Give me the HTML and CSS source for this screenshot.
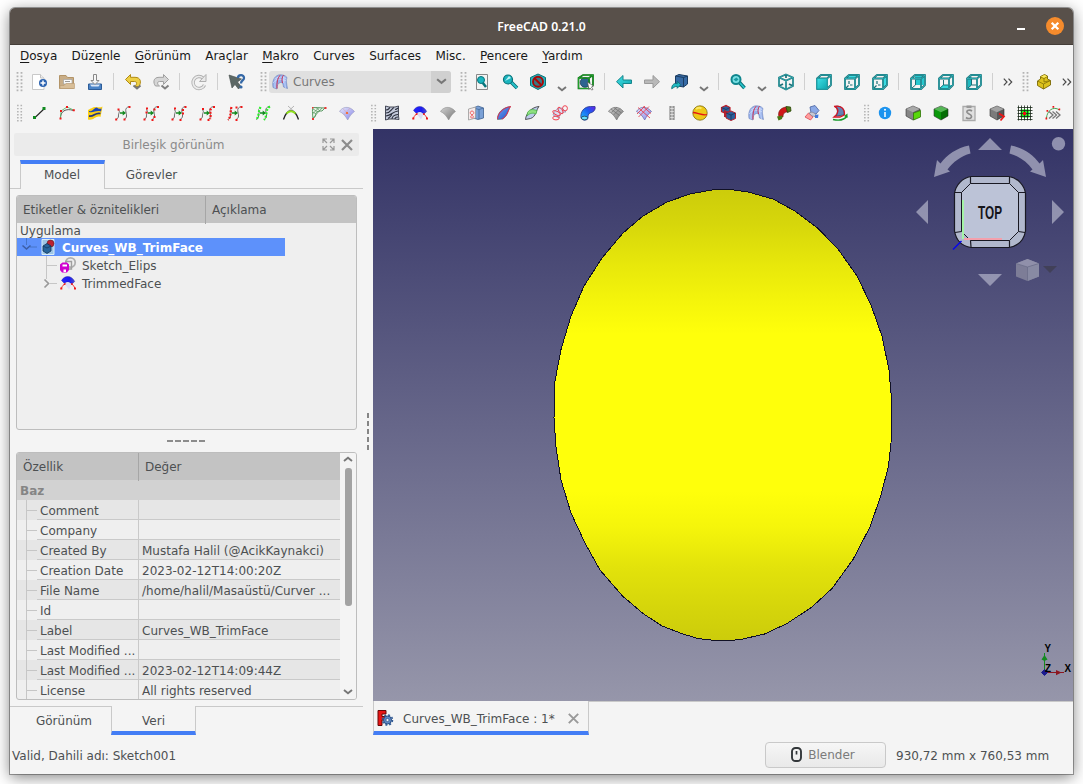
FILE: index.html
```html
<!DOCTYPE html>
<html lang="tr">
<head>
<meta charset="utf-8">
<title>FreeCAD 0.21.0</title>
<link rel="stylesheet" href="styles.css">
</head>
<body>
<svg class="defs" width="0" height="0">
  <defs>
    <linearGradient id="lilac" x1="0" y1="0" x2="1" y2="1"><stop offset="0" stop-color="#e6e6fb"/><stop offset="1" stop-color="#8686e8"/></linearGradient>
    <linearGradient id="silver" x1="0" y1="0" x2="1" y2="1"><stop offset="0" stop-color="#d0d0d0"/><stop offset="1" stop-color="#777"/></linearGradient>
    <linearGradient id="deep" x1="0" y1="0" x2="1" y2="0"><stop offset="0" stop-color="#2424ff"/><stop offset=".6" stop-color="#1c1cf0"/><stop offset="1" stop-color="#5050d0"/></linearGradient>
    <linearGradient id="sky" x1="0" y1="1" x2="1" y2="0"><stop offset="0" stop-color="#1fc4ff"/><stop offset=".6" stop-color="#1b5cf0"/><stop offset="1" stop-color="#6a20e8"/></linearGradient>
    <linearGradient id="leaf" x1="0" y1="0" x2="1" y2="1"><stop offset="0" stop-color="#6fa2f5"/><stop offset="1" stop-color="#1f52c4"/></linearGradient>
    <linearGradient id="aqua" x1="0" y1="0" x2="1" y2="1"><stop offset="0" stop-color="#3fe0e6"/><stop offset="1" stop-color="#0fa6ae"/></linearGradient>
    <linearGradient id="egg" x1="0" y1="0" x2="0" y2="1">
      <stop offset="0" stop-color="#cccc0b"/><stop offset=".08" stop-color="#d7d70b"/><stop offset=".17" stop-color="#e8e80b"/><stop offset=".25" stop-color="#f5f50b"/><stop offset=".32" stop-color="#ffff0b"/><stop offset=".67" stop-color="#ffff0b"/><stop offset=".75" stop-color="#f5f50b"/><stop offset=".84" stop-color="#e2e20b"/><stop offset=".93" stop-color="#d5d50b"/><stop offset="1" stop-color="#cccc0b"/>
    </linearGradient>
    <linearGradient id="backdrop" x1="0" y1="0" x2="0" y2="1"><stop offset="0" stop-color="#333366"/><stop offset="1" stop-color="#9696aa"/></linearGradient>

    <symbol id="grip" viewBox="0 0 8 22">
      <path d="M1.500 1V22M5.500 1V22" stroke="#b4b4b4" stroke-width="1.800" stroke-dasharray="1.700 1.800"/>
    </symbol>
    <symbol id="chev" viewBox="0 0 10 6"><path d="M1 1L5 4.300L9 1" fill="none" stroke="#777" stroke-width="1.900"/></symbol>
    <symbol id="more" viewBox="0 0 10 8"><path d="M.8 .7L4 4L.8 7.300M5.500 .7L8.700 4L5.500 7.300" fill="none" stroke="#4a4a4a" stroke-width="1.200"/></symbol>

    <symbol id="cubewire" viewBox="0 0 18 18">
      <path d="M2 5.500L6 2H16V12L12 16H2ZM2 5.500H12V16M12 5.500L16 2" fill="none" stroke="#1b7077" stroke-width="1.800" stroke-linejoin="round"/>
      <path d="M2 5.500L6 2H16V12L12 16H2ZM2 5.500H12V16M12 5.500L16 2" fill="none" stroke="#35bfc6" stroke-width=".7"/>
    </symbol>
    <symbol id="squig" viewBox="0 0 18 18">
      <path d="M4 5.500C7 7 4 9.500 4.500 12C4.500 14 3 15 2 15.500M15.500 2.500C9 4 13 9 12.500 12C12.500 14 11 15 10 15.500" fill="none" stroke="#6a6a6a"/>
    </symbol>
    <symbol id="go" viewBox="0 0 18 18"><path d="M6 8.300H8.700V6.500L12 9L8.700 11.500V9.700H6Z" fill="#138a20"/></symbol>
    <symbol id="patch" viewBox="0 0 18 18"><path d="M1.500 7.500C4 3 11 1 16.500 7.500C13.500 9.500 11.500 12.500 9.700 16C7.500 12 5 9 1.500 7.500Z"/></symbol>
    <symbol id="trimmed" viewBox="0 0 18 18">
      <path d="M2.500 6.500C5.500 1 12.500 1 15.700 7.500L12.500 10.300C9.500 7 7.500 8 5.500 9.500Z" fill="url(#deep)" stroke="#1a1a90" stroke-width=".4"/>
      <path d="M5.500 9.700C8 7.300 10.500 7.800 12.500 10.300L10 15.500C9 14 7 11.500 5.500 9.700Z" fill="#dcdcf4"/>
      <path d="M2.300 14.500C3.500 11.500 4.500 10.500 6.500 9.500M16 14.500C15 12 14 10.800 12.500 10" fill="none" stroke="#f03030" stroke-width="1"/>
      <path d="M1.300 13.500h2v2h-2zM15 13.500h2v2h-2zM4.800 9.500h1.600v1.600H4.800zM12.200 9.300h1.600v1.600h-1.600z" fill="#f01818"/>
    </symbol>
    <symbol id="box" viewBox="0 0 18 18">
      <path d="M9 2L16 5V12L9 16L2 12V5Z" stroke="#333" stroke-width=".6"/><path d="M9 2L16 5L9 8.300L2 5Z" fill="#fff" fill-opacity=".3"/><path d="M9 8.300L16 5V12L9 16Z" fill="#000" fill-opacity=".28"/>
    </symbol>
    <symbol id="fan" viewBox="0 0 18 18">
      <path d="M2 14.500C1 8 3 3.500 7.500 2C11 1.500 14 2 16 4.500C15 7 15.500 11 16.500 15.500L12.500 14C12 10.500 11.500 9.500 9.500 9.500C7 10 6 12 6 16Z" fill="#95b0ec" stroke="#6d83bb" stroke-width=".6"/>
      <path d="M4 15C3.500 9 5 4.500 9 2.500M2.200 10C4 6 9 5 15.500 8M3.500 6C7 3.500 12 3.500 15.500 6M14.500 15C13.500 9 13.500 6 14 3.500M12.500 10L12.500 3" fill="none" stroke="#dbe6ff" stroke-width=".6"/>
      <path d="M6 15.500C5.500 10 6.500 5 9 2.200M11.500 10C10.500 7 11 4 12.500 2.200" fill="none" stroke="#cf3050" stroke-width="1"/>
    </symbol>
  </defs>
</svg>

<div class="window">
  <header class="titlebar">
    <span class="titlebar-text">FreeCAD 0.21.0</span>
    <div class="titlebar-buttons">
      <span class="minimize"></span>
      <svg class="close" viewBox="0 0 18 18"><circle cx="9" cy="9" r="9" fill="#f58b2c"/><path d="M5.700 5.700L12.300 12.300M12.300 5.700L5.700 12.300" stroke="#fff" stroke-width="2.300"/></svg>
    </div>
  </header>

  <nav class="menubar">
    <span><u>D</u>osya</span><span>Düz<u>e</u>nle</span><span><u>G</u>örünüm</span><span>Araçlar</span><span><u>M</u>akro</span><span>Curves</span><span>Surfaces</span><span>Misc.</span><span><u>P</u>encere</span><span><u>Y</u>ardım</span>
  </nav>

  <div class="toolbar">
    <svg class="grip"><use href="#grip"/></svg>
    <svg class="tool" viewBox="0 0 18 18"><path d="M2.500 1.500H10.500L14 5V16.500H2.500Z" fill="#fff" stroke="#c9c9c9"/><path d="M10.500 1.500V5H14" fill="#eee" stroke="#c4c4c4"/><circle cx="13" cy="10" r="4" fill="#2c63b0"/><path d="M13 7.500V12.500M10.500 10H15.500" stroke="#fff" stroke-width="1.500"/></svg>
    <svg class="tool" viewBox="0 0 18 18"><path d="M1.500 2.500H8L9.500 4.500H15.500V15.500H1.500Z" fill="#c8ad87" stroke="#b39468"/><path d="M5.500 6.500H14V11H5.500Z" fill="#fafafa" stroke="#999" stroke-width=".6"/><path d="M7 8.500H12" stroke="#999"/><path d="M2 15.500V12.500H6L8 10.500H16.500V15.500Z" fill="#d8be98" stroke="#b99b72" stroke-width=".6"/></svg>
    <svg class="tool" viewBox="0 0 18 18"><path d="M2.500 11H15.500V16.500H2.500Z" fill="#4a83c6" stroke="#2d5c97"/><path d="M4 11.500H14L12.500 13.500H5.500Z" fill="#dce8f7"/><path d="M7.500 1.500H10.500V7.500H13L9 11.500L5 7.500H7.500Z" fill="#f6f6f6" stroke="#888"/></svg>
    <i class="sep"></i>
    <svg class="tool" viewBox="0 0 18 18"><path d="M6.500 1.500V4.300H11C17 4.300 17.500 9.500 15 13.500H10.500C13 12 13.500 8.500 10.500 8.500H6.500V11.500L1.500 6.500Z" fill="#edcf45" stroke="#b08a14"/><path d="M9.500 12.500L13 15.500L16.500 12.500" fill="none" stroke="#777" stroke-width="2"/></svg>
    <svg class="tool" viewBox="0 0 18 18"><path d="M11.500 1.500V4.300H7C1 4.300 1 10 3.500 13H7.500C5 11.500 5 8.500 7.500 8.500H11.500V11.500L16.500 6.500Z" fill="#d6d6d6" stroke="#a0a0a0"/><path d="M9.500 12.500L13 15.500L16.500 12.500" fill="none" stroke="#808080" stroke-width="2"/></svg>
    <i class="sep"></i>
    <svg class="tool" viewBox="0 0 18 18"><path d="M13 5A6 6 0 1 0 14.500 12" fill="none" stroke="#b0b0b0" stroke-width="3.400"/><path d="M13 5A6 6 0 1 0 14.500 12" fill="none" stroke="#ececec" stroke-width="1.600"/><path d="M16 1.500V8.500H9.500Z" fill="#e9e9e9" stroke="#b0b0b0"/></svg>
    <i class="sep"></i>
    <svg class="tool" viewBox="0 0 18 18"><path d="M1 2L13.500 6L9.500 9L13 13.500L10.500 16L7 11.500L4 15Z" fill="#5c6865" stroke="#454e4b" stroke-width=".6"/><path d="M10 5C10 1.500 16 1 16 5C16 7.500 13 7.500 13 10.500" fill="none" stroke="#3568a6" stroke-width="2.300"/><circle cx="13" cy="14" r="1.600" fill="#3568a6"/></svg>

    <svg class="grip grip-combo"><use href="#grip"/></svg>
    <div class="combo">
      <svg class="combo-icon" viewBox="0 0 18 18"><use href="#fan"/></svg>
      <span>Curves</span>
      <div class="combo-arrow"><svg width="11" height="7"><use href="#chev"/></svg></div>
    </div>
    <svg class="grip grip-view"><use href="#grip"/></svg>

    <svg class="tool" viewBox="0 0 18 18"><path d="M3.500 1.500H14.500V16.500H3.500Z" fill="#f3f3f3" stroke="#888"/><path d="M9.500 9.500L13 14" stroke="#08757c" stroke-width="2.600"/><circle cx="8" cy="7" r="3.500" fill="#1bb5bf" stroke="#08757c"/></svg>
    <svg class="tool" viewBox="0 0 18 18"><path d="M10 9L16 15" stroke="#086d74" stroke-width="3.600"/><path d="M10 9L16 15" stroke="#28c4cc" stroke-width="1.800"/><circle cx="7" cy="6.500" r="4.500" fill="#1bb5bf" stroke="#087077" stroke-width="1.200"/><path d="M4 8L8 3L10 5Z" fill="#bdf3f5"/></svg>
    <div class="drop">
      <svg class="tool" viewBox="0 0 18 18"><path d="M9 1L16.500 4.500V12.500L9 16.500L1.500 12.500V4.500Z" fill="#25b3bd" stroke="#087077"/><circle cx="9" cy="8.700" r="5" fill="#45606c" fill-opacity=".7" stroke="#a80808" stroke-width="1.900"/><path d="M5.500 5.200L12.500 12.200" stroke="#a80808" stroke-width="2"/></svg>
      <svg class="chev"><use href="#chev"/></svg>
    </div>
    <svg class="tool" viewBox="0 0 18 18"><circle cx="8" cy="9.500" r="4.800" fill="#2d6390" stroke="#12344f" stroke-width=".7"/><path d="M1.500 5L6 2H16V12L12 15.500H1.500ZM1.500 5H12V15.500M12 5L16 2" fill="none" stroke="#0a6612" stroke-width="1.700"/><path d="M1.500 5L6 2H16V12L12 15.500H1.500ZM1.500 5H12V15.500M12 5L16 2" fill="none" stroke="#26ac32" stroke-width=".8"/><path d="M10.500 9L16.500 13L14.500 14L16 16.500L14.500 17L13 15L12 16.500Z" fill="#fff" stroke="#444" stroke-width=".6"/></svg>
    <i class="sep"></i>
    <svg class="tool" viewBox="0 0 18 18"><path d="M8 2.500V7H16.500V10.500H8V15L1.500 8.700Z" fill="url(#aqua)" stroke="#16868c"/></svg>
    <svg class="tool" viewBox="0 0 18 18"><path d="M10 2.500V7H1.500V10.500H10V15L16.500 8.700Z" fill="#b9b9b9" stroke="#9a9a9a"/></svg>
    <div class="drop">
      <svg class="tool" viewBox="0 0 18 18"><path d="M4.500 3L8 1.500L16.500 3V11L12.500 14L4.500 12.500Z" fill="#366aa5" stroke="#1b3d62"/><path d="M4.500 3L12.500 4.500L16.500 3M12.500 4.500V14" fill="none" stroke="#1b3d62"/><path d="M1.500 15C1.500 10 5 9 7 10V7.500L10.500 11L7 14.500V12.500C5 12.500 4 13.500 1.500 15Z" fill="#1fbac3" stroke="#08686e" stroke-width=".8" transform="translate(-.8 .8)"/></svg>
      <svg class="chev"><use href="#chev"/></svg>
    </div>
    <i class="sep"></i>
    <div class="drop">
      <svg class="tool" viewBox="0 0 18 18"><path d="M10 9L15.500 15" stroke="#086d74" stroke-width="3.600"/><path d="M10 9L15.500 15" stroke="#28c4cc" stroke-width="1.800"/><circle cx="7" cy="6.500" r="4.500" fill="#78dfe3" stroke="#0f858d" stroke-width="2"/><path d="M4.500 6.500L7.500 4.500L9.500 6.500L7 8.500Z" fill="#1a9aa2"/></svg>
      <svg class="chev"><use href="#chev"/></svg>
    </div>
    <svg class="tool" viewBox="0 0 18 18"><path d="M9 1.500L16 4.500V13L9 16.500L2 13V4.500ZM2 4.500L9 7.500L16 4.500M9 7.500V16.500M2 13L6 11M16 13L12 11M9 2V5" fill="none" stroke="#1b7077" stroke-width="1.700"/><path d="M9 1.500L16 4.500V13L9 16.500L2 13V4.500ZM2 4.500L9 7.500L16 4.500M9 7.500V16.500" fill="none" stroke="#3cc2c8" stroke-width=".6"/></svg>
    <i class="sep"></i>
    <svg class="tool" viewBox="0 0 18 18"><use href="#cubewire"/><path d="M2 5.500H12V16H2Z" fill="url(#aqua)" stroke="#1fa3aa"/></svg>
    <svg class="tool" viewBox="0 0 18 18"><path d="M2 5.500L6 2H16L12 5.500Z" fill="#39dce2"/><use href="#cubewire"/><path d="M6 8V11M5.500 12.500L3 15M7 12H9.500" fill="none" stroke="#1b7077" stroke-width="1.200"/></svg>
    <svg class="tool" viewBox="0 0 18 18"><path d="M12 5.500L16 2V12L12 16Z" fill="#39dce2"/><use href="#cubewire"/><path d="M6 8V11M5.500 12.500L3 15M7 12H9.500" fill="none" stroke="#1b7077" stroke-width="1.200"/></svg>
    <i class="sep"></i>
    <svg class="tool" viewBox="0 0 18 18"><path d="M6 3H15V12H6Z" fill="#27c8cf"/><use href="#cubewire"/><path d="M6.500 7V12L3 15" fill="none" stroke="#1b7077"/></svg>
    <svg class="tool" viewBox="0 0 18 18"><path d="M3 15L6 12H15L12 16Z" fill="#35d8de"/><use href="#cubewire"/><path d="M6.500 7V12L3 15M6.500 12H11" fill="none" stroke="#1b7077"/></svg>
    <svg class="tool" viewBox="0 0 18 18"><path d="M2.500 5.500L6.500 3V12L3 15.500Z" fill="#1cb8bf"/><use href="#cubewire"/><path d="M6.500 6V12L3 15M6.500 12H11" fill="none" stroke="#1b7077"/></svg>
    <i class="sep"></i>
    <svg class="more"><use href="#more"/></svg>
    <svg class="grip grip-end"><use href="#grip"/></svg>
    <svg class="tool" viewBox="0 0 18 18"><path d="M2.500 8L5.500 6V3.500L9.500 1.500L12.500 3V6L15.500 7.500V12L8.500 16L2.500 12.500Z" fill="#dcc21c" stroke="#7a6805" stroke-width=".9"/><path d="M5.500 4L9 5.500L12.500 3.500M9 5.500V9L15 7.500M2.500 8L8.500 11V16M8.500 11L15.500 7.500" fill="none" stroke="#7a6805" stroke-width=".7"/><path d="M6 3.500L9.500 2L12 3.200L9 4.800Z" fill="#fbea61"/></svg>
    <svg class="more more-last"><use href="#more"/></svg>
  </div>

  <div class="toolbar">
    <svg class="grip"><use href="#grip"/></svg>
    <svg class="tool" viewBox="0 0 18 18"><path d="M5 13.500L14.500 4.500" stroke="#222" stroke-width="1.100"/><path d="M3 12h3v3H3zM12.500 3h3v3h-3z" fill="#118a20"/></svg>
    <svg class="tool" viewBox="0 0 18 18"><path d="M2.500 15C2 7 8 4 15.500 6.500" fill="none" stroke="#555"/><path d="M2.500 14.500L3 7L9 3L15.500 6" fill="none" stroke="#5fb86a" stroke-width=".9"/><path d="M1.500 13.500h2v2h-2zM2 6h2v2H2zM8 2h2v2H8zM14.800 5.300h2v2h-2z" fill="#f01818"/></svg>
    <svg class="tool" viewBox="0 0 18 18"><path d="M2 6C5 5 6 3 10 3C12 3 14 4 16.500 2.500L14.500 13C10 11 8 17 2 15.500Z" fill="#fbcf14"/><path d="M3 7C7 8 8 3.500 11 3.500C12 5 14 5 15.500 4.500L15 7.500C10 6 8 9 3 8Z" fill="#1f44b8"/><path d="M3 12C8 13 9 8 14.500 9.500" fill="none" stroke="#28367c" stroke-width="1.800"/></svg>
    <svg class="tool" viewBox="0 0 18 18"><use href="#squig"/><use href="#go"/><path d="M3.500 4.500h2v2h-2zM1.200 14.500h2v2h-2zM14.500 2h2v2h-2zM9.500 14.500h2v2h-2z" fill="#f01818"/></svg>
    <svg class="tool" viewBox="0 0 18 18"><use href="#squig"/><use href="#go"/><path d="M4 3.500h2v2H4zM3.500 7.500h2v2h-2zM1.500 14.500h2v2h-2zM15 2h2v2h-2zM11.500 4.500h2v2h-2zM11.500 12h2v2h-2zM9.500 15h2v2h-2z" fill="#f01818"/></svg>
    <svg class="tool" viewBox="0 0 18 18"><use href="#squig"/><use href="#go"/><path d="M4 3.500h2v2H4zM1.500 14.500h2v2h-2zM14.500 2h2v2h-2zM12 5h2v2h-2zM12 8.500h2v2h-2zM9.500 15h2v2h-2z" fill="#f01818"/></svg>
    <svg class="tool" viewBox="0 0 18 18"><use href="#squig"/><use href="#go"/><path d="M13 4.500C11.500 8 13.500 11 12 15" fill="none" stroke="#f01818" stroke-width="2.200" stroke-dasharray="2 1.300"/><path d="M4 4h2v2H4zM1.500 14.500h2v2h-2zM15 2h2v2h-2zM9.500 15h2v2h-2z" fill="#f01818"/></svg>
    <svg class="tool" viewBox="0 0 18 18"><use href="#squig"/><use href="#go"/><path d="M5.500 3C4 8 5.500 12 2 16" fill="none" stroke="#f01818" stroke-width="2.200" stroke-dasharray="2 1.300"/><path d="M14.500 2h2v2h-2zM9.500 2.500h2v2h-2zM9.500 15h2v2h-2z" fill="#f01818"/></svg>
    <svg class="tool" viewBox="0 0 18 18"><use href="#squig"/><use href="#go"/><path d="M6.500 3C4 8 5.500 12 2 16M16 2.500C11 5 14 11 10 16" fill="none" stroke="#28f028" stroke-width="2.200" stroke-dasharray="2 1.500"/></svg>
    <svg class="tool" viewBox="0 0 18 18"><path d="M6 2L12 7.500M12 2L6 7.500" stroke="#b4b4b4"/><path d="M1.500 15.500C3.500 9 6 7 9 7C12 7 14.500 9 16.500 15.500" fill="none" stroke="#222" stroke-width="1.300"/><path d="M4.500 9.500C7.500 6.500 10.500 6.500 13.500 9.500" fill="none" stroke="#90e21a" stroke-width="1.900"/></svg>
    <svg class="tool" viewBox="0 0 18 18"><path d="M3 15C2 6 2.500 3.500 3.500 3.500L15 4L12 7C7 7 6 8 5.500 12Z" fill="#e7f4e7" stroke="#4d9157" stroke-width=".9"/><path d="M2.500 10L9 3.500M3 14L12 4M3 5L8 8M6 3.500L10 7M3 8L6 10" stroke="#4d9157" stroke-width=".7"/><path d="M2 14h2v2H2zM14.500 3h2v2h-2zM2 3h1.500v1.500H2z" fill="#e33"/></svg>
    <svg class="tool" viewBox="0 0 18 18"><use href="#patch" fill="url(#lilac)" stroke="#9a9ac0" stroke-width=".6"/><path d="M6 11L12 4M5 5L12 11" stroke="#d99" stroke-width=".6" opacity=".7"/><path d="M8 8h2v2H8z" fill="#f07040"/></svg>

    <svg class="grip grip-surf"><use href="#grip"/></svg>
    <svg class="tool" viewBox="0 0 18 18"><path d="M2.500 2L6 3H12L15.500 2V12L16 15.500L11 15H6L2.500 16Z" fill="#c3c9da" stroke="#353a48" stroke-width=".9"/><path d="M3 6C6 6 6 4 7 3.500M3 9C8 9 8 5 11 3.500M3 12C9 11 9 8 15 7M5 14.500C8 13 8 11 9 10.500M9 15C9 12 11 11 15 10.500M12 15C12 13.500 13 13 15 13M12 5.500C13 5.500 14 5 15 4" fill="none" stroke="#2a2f3c" stroke-width="1.100"/></svg>
    <svg class="tool" viewBox="0 0 18 18"><use href="#trimmed"/></svg>
    <svg class="tool" viewBox="0 0 18 18"><use href="#patch" fill="url(#silver)" stroke="#888" stroke-width=".5"/></svg>
    <svg class="tool" viewBox="0 0 18 18"><path d="M6.500 4L11 2L16.500 4V14L11 15.500L6.500 14Z" fill="#7aa0d6" stroke="#3d6190" stroke-width=".8"/><path d="M6.500 4L12 5.500L16.500 4M12 5.500V15" fill="none" stroke="#3d6190" stroke-width=".7"/><path d="M1.500 5L8.500 3V14L1.500 16Z" fill="#f4ebeb" stroke="#999" stroke-width=".8"/><path d="M5 7A1.800 1.800 0 1 0 5.100 7M5 11.500A1.300 1.300 0 1 0 5.100 11.500" fill="none" stroke="#e55" stroke-width=".9"/></svg>
    <svg class="tool" viewBox="0 0 18 18"><path d="M2.500 15.500C2 9.500 7 3.500 15.500 2.500C13 6 13 12 7.500 15Z" fill="url(#leaf)" stroke="#555" stroke-width=".6"/><path d="M2.500 15C3 9 8 4 15.500 2.500M15.500 2.500C12.500 7 12.500 12 7 15" fill="none" stroke="#ee2846" stroke-width=".9"/></svg>
    <svg class="tool" viewBox="0 0 18 18"><path d="M2.500 15.500C3 9 9 3 16 2.500C13 6 13 13 7.500 14.500Z" fill="#bccbec" stroke="#333" stroke-width=".8"/><path d="M4.500 8.500C7 5 9 5 14 6.500L13 10C9 8 6 10 4 12Z" fill="#8fe080" stroke="#35a535" stroke-width=".6"/></svg>
    <svg class="tool" viewBox="0 0 18 18"><path d="M2 11C4 5 7 4 11 4L15 8C11 8 9 10 8 14Z" fill="#dadef2" stroke="#8890b8" stroke-width=".7"/><g fill="none" stroke="#f03040" stroke-width=".9"><ellipse cx="5" cy="14" rx="3.300" ry="1.900"/><ellipse cx="5.500" cy="9" rx="4" ry="1.700" transform="rotate(25 5.500 9)"/><ellipse cx="9.500" cy="6.500" rx="1.700" ry="3.800" transform="rotate(-35 9.500 6.500)"/><ellipse cx="14" cy="4.300" rx="2.400" ry="2.600"/></g></svg>
    <svg class="tool" viewBox="0 0 18 18"><path d="M2 14C1 8 5 2.500 11.500 2.500H16C17 6 14 8.500 11 9C9 10 9 12 9 14.500C7 17 3.500 16.500 2 14Z" fill="url(#sky)" stroke="#24368c" stroke-width=".8"/><ellipse cx="5.500" cy="14" rx="3.200" ry="1.800" fill="#66ddff" stroke="#245" stroke-width=".8"/></svg>
    <svg class="tool" viewBox="0 0 18 18"><use href="#patch" fill="url(#silver)" stroke="#777" stroke-width=".7"/><path d="M4 5L12.500 11.500M7 3.700L14.500 9M13 4.500L6.500 11M10 3.300L4.500 8.500" stroke="#6c6c6c" stroke-width=".7"/></svg>
    <svg class="tool" viewBox="0 0 18 18"><use href="#patch" fill="url(#lilac)" stroke="#66a" stroke-width=".7"/><path d="M3 3.500L15 14M14 2.500L3.500 13M8 2.500L16 9.500M10 2L2 10" stroke="#e8323e" stroke-width=".8"/></svg>
    <svg class="tool" viewBox="0 0 18 18"><path d="M7 2V16M11 2V16M7 3H11M7 6H11M7 9H11M7 12H11M7 15H11" stroke="#6a6a6a" stroke-width=".9"/><path d="M7.500 4.500H10.500M7.500 7.500H10.500M7.500 10.500H10.500M7.500 13.500H10.500" stroke="#ddd"/></svg>
    <svg class="tool" viewBox="0 0 18 18"><circle cx="9" cy="9" r="7.200" fill="#eec918" stroke="#7d6a0a" stroke-width=".8"/><path d="M5 5C7 3.500 9 3.500 10.500 4.500" stroke="#fbe863" stroke-width="2" fill="none"/><path d="M2 8.500C6 8.500 12 12 16 10.500" fill="none" stroke="#e21616" stroke-width="1.300"/></svg>
    <svg class="tool" viewBox="0 0 18 18"><path d="M2.500 3.500L7 1.500L11 3.500V7.500L7 9.500L2.500 7.500Z" fill="#2f5f99" stroke="#c01c28" stroke-width="1.200"/><path d="M5 6L10 8L9.500 13L5 13Z" fill="#b51f2d"/><path d="M7 9L12 7L16.500 9V14.500L12 16.500L7 14Z" fill="#2c5f9a" stroke="#b51f2d"/><path d="M7 9L12 11L16.500 9M12 11V16M2.500 3.500L7 5.500L11 3.500" stroke="#173660" stroke-width=".8" fill="none"/></svg>
    <svg class="tool" viewBox="0 0 18 18"><use href="#fan"/></svg>
    <svg class="tool" viewBox="0 0 18 18"><path d="M4 13C2.500 8 5 4 11 3L13 8C9 8 8 10 8 13Z" fill="#d01818" stroke="#701010" stroke-width=".6"/><path d="M11 2.500L15.500 3L16 7L12.500 8.500Z" fill="#527a14" stroke="#2a4608" stroke-width=".8"/><path d="M2 12.500L7.500 11.500L7 15L3.500 16.500Z" fill="#4a7814"/></svg>
    <svg class="tool" viewBox="0 0 18 18"><path d="M7 3L12 1.500L16 6.500L13 10L8 9Z" fill="#8ba9e6" stroke="#4560a0" stroke-width=".8"/><path d="M2 13L5.500 9L10 13L7.500 16Z" fill="#ff9d9d" stroke="#dd4a52" stroke-width=".8"/><path d="M6 9L9 8L13 10L12 12.500L9 12Z" fill="#c6c9d6" stroke="#778" stroke-width=".6"/><path d="M12 11L15.500 10.500L15 14L12 14Z" fill="#3f78dc"/></svg>
    <svg class="tool" viewBox="0 0 18 18"><path d="M4 2.500C10 1 14 5 13 11L5 12C7 9 7 5 4 2.500Z" fill="#6482b4" stroke="#2d3c60" stroke-width=".8"/><path d="M4 2.500C8 5 8 9 3 13H9L13.500 11M3 2.500C9 1 14 4 13.500 11" fill="none" stroke="#d61522" stroke-width="1.300"/><path d="M2 15.500C9 17 14 15 16 12" fill="none" stroke="#149a28" stroke-width="1.400"/><path d="M13 12L16.500 9.500V14Z" fill="#149a28"/></svg>

    <svg class="grip grip-misc"><use href="#grip"/></svg>
    <svg class="tool" viewBox="0 0 18 18"><circle cx="9" cy="9" r="6.200" fill="#1b93ee"/><circle cx="9" cy="5.800" r="1" fill="#fff"/><path d="M9 8V13" stroke="#fff" stroke-width="1.500"/></svg>
    <svg class="tool" viewBox="0 0 18 18"><use href="#box" fill="#858585"/><path d="M9.500 9L16.500 6.500V13L9.500 16Z" fill="#58d80a" stroke="#357a0b" stroke-width=".8"/></svg>
    <svg class="tool" viewBox="0 0 18 18"><use href="#box" fill="#0b990b"/></svg>
    <svg class="tool" viewBox="0 0 18 18"><path d="M3 2.500H15V16.500H3Z" fill="#e0e0e0" stroke="#aaa" stroke-width="1.300"/><path d="M6.500 1.500H11.500V4H6.500Z" fill="#999"/><path d="M12 7C10 5.500 6.500 6 7 8.300C7.500 10 11.500 10 11.500 12.300C11.500 15 8 15 6 13.500" fill="none" stroke="#8b8b8b" stroke-width="1.700"/></svg>
    <svg class="tool" viewBox="0 0 18 18"><use href="#box" fill="#7b7b7b"/><path d="M11 9.500L16 12.500L12.500 16.500" fill="none" stroke="#ee1515" stroke-width="1.700"/></svg>
    <svg class="tool" viewBox="0 0 18 18"><path d="M2 2H16V16H2Z" fill="#fff"/><path d="M4.500 5.500H13.500V13.500H4.500Z" fill="#1cf01c"/><path d="M2.500 1.500V16.500M5.500 1.500V16.500M8.500 1.500V16.500M11.500 1.500V16.500M14.500 1.500V16.500M1.500 3.500H16.500M1.500 6.500H16.500M1.500 9.500H16.500M1.500 12.500H16.500M1.500 15.500H16.500" stroke="#152415" stroke-width=".8"/><path d="M7 8h3v3H7z" fill="#e11"/></svg>
    <svg class="tool" viewBox="0 0 18 18"><path d="M2.500 14C3 7 9 1.500 15.500 6" fill="none" stroke="#49a555"/><path d="M1.500 13.500h1.700v2H1.500zM2.500 6h1.700v1.700H2.500zM8.500 2h1.700v1.700H8.500zM14.500 4.500h1.700v1.700h-1.700z" fill="#ee1515"/><path d="M5 7.500L9 11L5 14.500M8.500 7.500L12.500 11L8.500 14.500M12 7.500L16 11L12 14.500" fill="none" stroke="#777" stroke-width="1.300"/></svg>
  </div>

  <main class="main">
    <aside class="side">
      <div class="dock-title">
        <span>Birleşik görünüm</span>
        <div class="dock-buttons">
          <svg width="13" height="13" viewBox="0 0 13 13"><path d="M1 5V1H5M1 1L5 5M8 1H12V5M12 1L8 5M1 8V12H5M1 12L5 8M12 8V12H8M12 12L8 8" fill="none" stroke="#999" stroke-width="1.200"/></svg>
          <svg width="12" height="12" viewBox="0 0 12 12"><path d="M1 1L11 11M11 1L1 11" stroke="#8c8c8c" stroke-width="2.200"/></svg>
        </div>
      </div>
      <div class="tabs tabs-top">
        <div class="tab tab-active">Model</div>
        <div class="tab">Görevler</div>
      </div>

      <section class="panel tree">
        <div class="head"><div class="head-name">Etiketler &amp; öznitelikleri</div><div>Açıklama</div></div>
        <div class="tree-root">Uygulama</div>
        <div class="tree-row tree-selected">
          <svg class="branch" width="22" height="18"><path d="M9.500 0V7M13 9H20" stroke="#4674c8"/><path d="M5.500 7.500L9.500 11L13.500 7.500" fill="none" stroke="#3c5ea6" stroke-width="1.600"/></svg>
          <svg width="18" height="18" viewBox="0 0 18 18"><path d="M3 1.500H15V16.500H3Z" fill="#9dc5e4" stroke="#d8ecf8"/><circle cx="11.500" cy="5.500" r="3.500" fill="#bb2231" stroke="#521019" stroke-width=".5"/><path d="M4 8L8 5.500L12 8V13L8 15.500L4 13Z" fill="#26649b" stroke="#123455" stroke-width=".8"/><path d="M4 8L8 10L12 8" fill="none" stroke="#123455" stroke-width=".7"/></svg>
          <b>Curves_WB_TrimFace</b>
        </div>
        <div class="tree-row tree-child">
          <svg class="branch" width="18" height="18"><path d="M1.500 0V18M1.500 9.500H12" fill="none" stroke="#c6c6c6"/></svg>
          <svg width="18" height="18" viewBox="0 0 18 18"><circle cx="11.500" cy="6.500" r="4.700" fill="none" stroke="#b0b0b0" stroke-width="1.800"/><path d="M6 5.500H12.500V13H9" fill="none" stroke="#a0a0a0" stroke-width="1.400"/><path d="M1 8.500L3.500 6.500H8L10 8.500V14L8 16.500H3L1 14Z" fill="#cf00cf"/><path d="M3.500 8.500H8V10.500H3.500ZM4.500 13.500H7V16H4.500Z" fill="#fff"/></svg>
          <span>Sketch_Elips</span>
        </div>
        <div class="tree-row tree-child">
          <svg class="branch" width="18" height="18"><path d="M1.500 0V5M5 9.500H12" fill="none" stroke="#c6c6c6"/><path d="M-.5 5.500L3.500 9.500L-.5 13.500" fill="none" stroke="#999" stroke-width="1.700"/></svg>
          <svg width="18" height="18" viewBox="0 0 18 18"><use href="#trimmed"/></svg>
          <span>TrimmedFace</span>
        </div>
      </section>

      <div class="splitter-h"><i></i><i></i><i></i><i></i><i></i></div>

      <section class="panel props">
        <div class="prop-table">
          <div class="head"><div class="prop-head">Özellik</div><div>Değer</div></div>
          <div class="prop-group">Baz</div>
          <div class="prop"><span>Comment</span><span></span></div>
          <div class="prop"><span>Company</span><span></span></div>
          <div class="prop"><span>Created By</span><span>Mustafa Halil (@AcikKaynakci)</span></div>
          <div class="prop"><span>Creation Date</span><span>2023-02-12T14:00:20Z</span></div>
          <div class="prop"><span>File Name</span><span>/home/halil/Masaüstü/Curver ...</span></div>
          <div class="prop"><span>Id</span><span></span></div>
          <div class="prop"><span>Label</span><span>Curves_WB_TrimFace</span></div>
          <div class="prop"><span>Last Modified ...</span><span></span></div>
          <div class="prop"><span>Last Modified ...</span><span>2023-02-12T14:09:44Z</span></div>
          <div class="prop"><span>License</span><span>All rights reserved</span></div>
        </div>
        <div class="scroll">
          <svg class="scroll-up" width="10" height="6"><use href="#chev"/></svg>
          <i class="thumb"></i>
          <svg width="10" height="6"><use href="#chev"/></svg>
        </div>
      </section>

      <div class="tabs tabs-bottom">
        <div class="tab tab-first">Görünüm</div>
        <div class="tab tab-active">Veri</div>
        <div class="tab-rest"></div>
      </div>
    </aside>

    <div class="splitter-v"><i></i><i></i><i></i><i></i><i></i></div>

    <section class="work">
      <svg class="view" width="700" height="572" viewBox="373 129 700 572">
        <rect x="373" y="129" width="700" height="572" fill="url(#backdrop)"/>
        <polygon shape-rendering="crispEdges" fill="url(#egg)" stroke="#111125" points="715,189.500 730,189.500 748,192 773,199 794,210.500 817,227.500 838,249 857,276 871,305 882,336 889,370 892,405 891,443 888.500,466 881,495 870,527 853,559.500 832,588.500 812,607 787,623.500 764.500,634 743,639 731,640.500 715,640.500 698,638.500 683,634 662,626 643,613.500 622.500,596 600,570 585,543 571,513 561,480 556,447 554,418 555,381 561,349.500 571,316 584,286 602,258 623,233 643,216 667,202 690,194 706,191"/>
        <g fill="#a3a5bd" fill-opacity=".82">
          <path d="M990 138L1002 150H978ZM990 286L1002 274H978ZM916 212L928 200V224ZM1064 212L1052 200V224Z"/>
          <circle cx="1058.500" cy="143.800" r="6.700"/>
          <path d="M969 145.500L970.500 153.500C961 156 953 162 947.500 169.500L950 171.500L934 177L937 160L940.500 163.500C947 154.500 957 148 969 145.500Z"/>
          <path d="M1011 145.500L1009.500 153.500C1019 156 1027 162 1032.500 169.500L1030 171.500L1046 177L1043 160L1039.500 163.500C1033 154.500 1023 148 1011 145.500Z"/>
        </g>
        <path d="M971 176.500H1009C1018 178 1024 185 1025.500 193V231C1024 240 1018 246 1009 247.500H971C962 246 956 240 954.500 231V193C956 185 962 178 971 176.500Z" fill="#b1b8cd" stroke="#191923" stroke-width="1.200"/>
        <path d="M970.500 183.500H1009.500L1018.500 192.500V231.500L1009.500 240.500H970.500L961.500 231.500V192.500Z" fill="#bcc3d7" stroke="#191923"/>
        <path d="M970.500 183.500V177M1009.500 183.500V177M1018.500 192.500H1025M1018.500 231.500L1025 232.500M1009.500 240.500V247M970.500 240.500L971 247M961.500 231.500L955 232.500M961.500 192.500H955" stroke="#191923" stroke-width="1.200"/>
        <path d="M963 200V239" stroke="#a4f4a4" stroke-width="2"/><path d="M964 239H1002" stroke="#f4a0ac" stroke-width="2"/><path d="M961.500 241L953 249.500" stroke="#0505ee" stroke-width="1.500"/>
        <text x="978" y="218.500" class="cube-label" textLength="24" lengthAdjust="spacingAndGlyphs">TOP</text>
        <path d="M1027.500 259L1039 263.500V276.500L1027.500 281L1016 276.500V263.500Z" fill="#7d7d97"/><path d="M1027.500 259L1039 263.500L1027.500 267L1016 263.500Z" fill="#9090aa"/><path d="M1027.500 267L1039 263.500V276.500L1027.500 281Z" fill="#888aa3"/><path d="M1016 263.500L1027.500 267L1039 263.500M1027.500 267V281" stroke="#696b86" fill="none" stroke-width=".7"/>
        <path d="M1043 266H1057L1050 273Z" fill="#414058"/>
        <path d="M1044.500 672V653" stroke="#138a20"/><path d="M1044.500 655L1047.500 659.500L1044.500 661L1041.500 659.500Z" fill="#138a20"/>
        <path d="M1045 672.500H1064" stroke="#8c1620"/><path d="M1056 670L1061.500 672.500L1056 675.200Z" fill="#8c1620"/>
        <path d="M1044.500 669.500L1047.500 672.500L1044.500 675.500L1041.500 672.500Z" fill="#1c1c90" stroke="#1c1c90"/>
        <text x="1044.500" y="652" class="axis" textLength="6.500" lengthAdjust="spacingAndGlyphs">Y</text><text x="1045" y="672" class="axis" textLength="6" lengthAdjust="spacingAndGlyphs">Z</text><text x="1064.500" y="672" class="axis" textLength="6.500" lengthAdjust="spacingAndGlyphs">X</text>
      </svg>
      <div class="doc-tabs">
        <div class="doc-tab">
          <svg width="18" height="18" viewBox="0 0 18 18"><path d="M2 1.500H10V5H6V7.500H9V11H6V16.500H2Z" fill="#ea1515" stroke="#650808"/><circle cx="11.500" cy="11" r="4" fill="#5e88c5" stroke="#294d82"/><circle cx="11.500" cy="11" r="5" fill="none" stroke="#315a94" stroke-width="1.500" stroke-dasharray="2 1.930"/><circle cx="11.500" cy="11" r="1.600" fill="#eef3fb" stroke="#294d82" stroke-width=".7"/></svg>
          <span>Curves_WB_TrimFace : 1*</span>
          <svg width="11" height="11" viewBox="0 0 11 11"><path d="M.8 .8L10.200 10.200M10.200 .8L.8 10.200" stroke="#999" stroke-width="1.900"/></svg>
        </div>
      </div>
    </section>
  </main>

  <footer class="status">
    <span class="message">Valid, Dahili adı: Sketch001</span>
    <div class="nav-button">
      <svg width="11" height="15" viewBox="0 0 11 15"><rect x="1" y="1" width="9" height="13" rx="3.500" fill="none" stroke="#33373a" stroke-width="1.900"/><path d="M5.500 4V7.500" stroke="#33373a" stroke-width="1.700"/></svg>
      <span>Blender</span>
    </div>
    <span class="size">930,72 mm x 760,53 mm</span>
  </footer>
</div>
</body>
</html>
```

FILE: styles.css
```css
* { box-sizing: border-box; }

body {
  margin: 0;
  width: 1083px;
  height: 784px;
  overflow: hidden;
  padding: 8px 10px 10px;
  background: #fff;
  font: 12px/16px "DejaVu Sans", sans-serif;
  color: #4d5052;
}

svg { display: block; flex: none; }
.defs { position: absolute; }

.window {
  display: flex;
  flex-direction: column;
  width: 1063px;
  height: 766px;
  background: #f4f4f4;
  border-radius: 5px 5px 0 0;
  box-shadow: 0 0 0 1px rgba(70, 70, 70, .5), 0 3px 15px rgba(0, 0, 0, .5);
}

.titlebar {
  display: grid;
  grid-template-columns: 1fr auto 1fr;
  align-items: center;
  height: 37px;
  flex: none;
  background: #58504a;
  border-bottom: 1px solid #443d38;
  border-radius: 5px 5px 0 0;
}
.titlebar-text {
  grid-column: 2;
  padding-top: 1px;
  font: 600 12.200px/16px "Noto Sans", sans-serif;
  color: #fff;
}
.titlebar-buttons {
  display: flex;
  justify-content: flex-end;
  align-items: center;
  gap: 21px;
  padding-right: 9px;
}
.minimize { width: 8px; height: 2px; margin-top: 6px; background: #fff; }
.close { width: 18px; height: 18px; }

.menubar {
  display: flex;
  align-items: center;
  gap: 14.300px;
  height: 21px;
  flex: none;
  padding-left: 10px;
  color: #181818;
}
.menubar u { text-underline-offset: 2px; }

.toolbar {
  display: flex;
  align-items: center;
  height: 31px;
  flex: none;
  padding-left: 6px;
}
.toolbar + .toolbar { height: 32px; }
.toolbar + .toolbar .grip { height: 19px; }
.grip { width: 8px; height: 22px; margin-right: 1px; }
.tool { width: 18px; height: 18px; margin: 0 5px; }
.sep { width: 1px; height: 17px; margin: 0 5px 0 4px; background: #d0d0d0; flex: none; }
.drop { display: flex; align-items: center; width: 48px; flex: none; }
.chev { width: 10px; height: 6px; margin: 14px 0 0 5px; }
.more { width: 10px; height: 8px; margin: 0 0 0 5px; }
.grip-combo { margin: 0 0 0 9px; }
.grip-view { margin: 0 0 0 9px; }
.grip-end { margin: 0 0 0 9px; }
.more-last { margin-left: 4px; }
.grip-surf { margin: 0 0 0 9px; }
.grip-misc { margin: 0 0 0 9px; }

.combo {
  display: flex;
  align-items: center;
  gap: 4px;
  width: 182px;
  height: 22px;
  margin-left: 1px;
  padding-left: 2px;
  flex: none;
  background: #e0e0e0;
  border-radius: 3px;
  color: #777;
}
.combo-icon { width: 18px; height: 18px; }
.combo-arrow {
  display: grid;
  place-items: center;
  width: 20px;
  height: 22px;
  margin-left: auto;
  background: #d0d0d0;
  border-radius: 0 3px 3px 0;
}

.main { display: flex; height: 606px; flex: none; }
.side { display: flex; flex-direction: column; width: 353px; padding-top: 4px; }

.dock-title {
  display: grid;
  grid-template-columns: 1fr auto 1fr;
  align-items: center;
  height: 23px;
  margin: 0 4px;
  padding-right: 6px;
  flex: none;
  background: #ebebeb;
  border-radius: 2px;
  color: #8a8a8a;
}
.dock-title span { grid-column: 2; padding-right: 20px; }
.dock-title > .dock-buttons { display: flex; justify-content: flex-end; align-items: center; gap: 6px; }

.tabs { display: flex; flex: none; }
.tab { display: grid; place-items: center; }
.tabs-top { height: 29px; margin-top: 4px; border-bottom: 1px solid #c9c9c9; }
.tabs-top .tab { width: 93px; padding-top: 1px; }
.tabs-top .tab-active {
  width: 85px;
  height: 29px;
  margin-left: 10px;
  padding: 0 1px 4px 0;
  background: #f4f4f4;
  border: solid #c9c9c9;
  border-width: 0 1px;
  border-top: 4px solid #437df5;
}

.panel {
  margin: 0 6px;
  flex: none;
  border: 1px solid #bdbdbd;
  border-radius: 3px;
  background: #efefef;
  overflow: hidden;
}
.tree { height: 235px; margin-top: 6px; }
.head { display: flex; align-items: center; height: 27px; background: #c3c3c3; }
.head div { line-height: 28px; padding-left: 6px; }
.head-name { width: 189px; border-right: 1px solid #a6a6a6; }
.tree-root { height: 15px; padding-left: 3px; line-height: 16px; }
.tree-row { display: flex; align-items: center; height: 18px; }
.tree-row span { margin-left: 5px; }
.tree-row b { margin-left: 5px; }
.tree-row span, .tree-row b { padding-top: 2px; }
.tree-selected { width: 268px; background: #5d91fb; color: #fff; }
.tree-child { padding-left: 28px; }
.tree-child .branch { width: 14px; overflow: visible; }

.splitter-h { display: flex; gap: 2px; justify-content: center; align-items: center; height: 22px; padding: 0 2px 1px 0; flex: none; }
.splitter-h i { width: 6px; height: 2px; background: #8c8c8c; }
.splitter-v { display: flex; flex-direction: column; gap: 3px; justify-content: center; align-items: center; width: 10px; padding-bottom: 1px; }
.splitter-v i { width: 2px; height: 5px; background: #858585; }

.props { display: flex; height: 248px; }
.prop-table { width: 323px; flex: none; }
.prop-head { width: 122px; border-right: 1px solid #a6a6a6; }
.prop-group { height: 20px; padding-left: 3px; line-height: 22px; font-weight: bold; color: #858585; background: #d2d2d2; }
.prop {
  display: grid;
  grid-template-columns: 102px 202px;
  height: 20px;
  padding-left: 20px;
  background:
    linear-gradient(#c6c6c6, #c6c6c6) 9px 0 / 1px 20px no-repeat,
    linear-gradient(#c6c6c6, #c6c6c6) 10px 10px / 10px 1px no-repeat;
}
.prop:nth-child(odd) { background-color: #e6e6e6; }
.prop span {
  height: 20px;
  padding-left: 3px;
  line-height: 22px;
  white-space: nowrap;
  border: solid #c9c9c9;
  border-width: 0 1px 1px 0;
}
.scroll { display: flex; flex-direction: column; align-items: center; width: 16px; padding: 3px 0 4px; background: #f4f4f4; }
.scroll-up { transform: scaleY(-1); }
.thumb { width: 7px; height: 138px; margin: 6px 0 auto; border-radius: 3px; background: #a3a3a3; }

.tabs-bottom { height: 29px; margin-top: 6px; }
.tabs-bottom .tab-first { width: 101px; padding-left: 7px; border-top: 1px solid #c9c9c9; }
.tabs-bottom .tab-active { width: 85px; padding-top: 5px; border: solid #c9c9c9; border-width: 0 1px; border-bottom: 4px solid #437df5; }
.tab-rest { flex: 1; border-top: 1px solid #c9c9c9; }

.work { width: 700px; }
.cube-label { font: bold 18px "Liberation Sans", sans-serif; fill: #15151a; }
.axis { font: bold 10px "Liberation Sans", sans-serif; fill: #000; }
.doc-tabs { height: 34px; border-top: 1px solid #c9c9c9; }
.doc-tab {
  display: flex;
  align-items: center;
  width: 216px;
  height: 34px;
  margin-top: -1px;
  padding: 4px 9px 0 2px;
  background: #f4f4f4;
  border: solid #c9c9c9;
  border-width: 0 1px;
  border-bottom: 4px solid #437df5;
}
.doc-tab span { margin: 0 auto 0 9px; padding-top: 1px; }

.status { display: flex; align-items: center; flex: 1; padding-left: 2px; }
.message, .size { padding-top: 2px; }
.nav-button {
  display: flex;
  align-items: center;
  justify-content: center;
  gap: 6px;
  width: 121px;
  height: 26px;
  margin-left: auto;
  padding-right: 5px;
  border: 1px solid #c9c9c9;
  border-radius: 4px;
  background: linear-gradient(#f6f6f6, #e9e9e9);
  color: #7b7b7b;
}
.nav-button span { padding-top: 1px; }
.size { width: 177px; margin-left: 10px; }
```
